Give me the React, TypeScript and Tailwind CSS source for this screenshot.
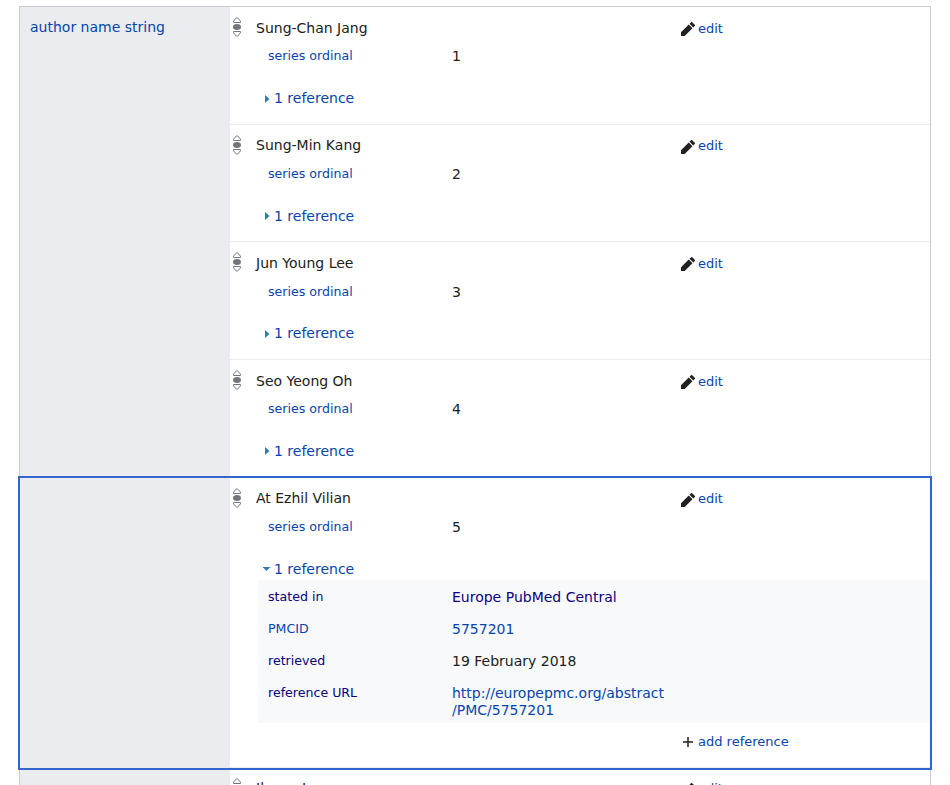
import React from 'react';

const authors = ['Sung-Chan Jang', 'Sung-Min Kang', 'Jun Young Lee', 'Seo Yeong Oh', 'At Ezhil Vilian', 'Ilsong Lee'];

function Rank() {
  return (
    <svg className="mt-[10px] ml-[3px] block h-5 w-2 shrink-0" viewBox="0 0 8 20" fill="none" stroke="#72777d" strokeWidth="1">
      <path d="M3.4 .9h1.2L7.5 4.2v1.3h-7V4.2z" />
      <ellipse cx="4" cy="10" rx="4" ry="3" fill="#72777d" stroke="none" />
      <path d="M3.4 19.1h1.2L7.5 15.8v-1.3h-7v1.3z" />
    </svg>
  );
}

function Pencil() {
  return (
    <svg className="mt-[2.5px] mr-[3px] ml-px h-[14px] w-[14px]" viewBox="1 1 18 18" fill="#202122">
      <path d="m16.77 8 1.94-2a1 1 0 0 0 0-1.41l-3.34-3.3a1 1 0 0 0-1.41 0L12 3.23zM1 14.25V19h4.75l9.96-9.96-4.75-4.75z" />
    </svg>
  );
}

function Qualifier({ label, visited, children }: { label: string; visited?: boolean; children: React.ReactNode }) {
  return (
    <div className="flex">
      <div className={`w-[184px] text-[12.6px] leading-4 ${visited ? 'text-[#0b0080]' : 'text-[#0645ad]'}`}>{label}</div>
      <div className="w-[225px] leading-[17px]">{children}</div>
    </div>
  );
}

function Statement({ name, index }: { name: string; index: number }) {
  const open = index === 4;
  return (
    <div className={`flex ${open ? 'relative z-10 h-[290.1px] outline-2 outline-[#3366cc]' : 'h-[117.625px]'}`}>
      <div className="w-[210px] shrink-0 bg-[#eaecf0] pt-[12px] pl-[10px] leading-[17px]">
        {index === 0 && <a className="text-[#0645ad]">author name string</a>}
      </div>
      <div className="flex grow border-b border-[#eaecf0]">
        <Rank />
        <div className="grow pl-[15px]">
          <div className="flex pt-[12.7px]">
            <div className="w-[424px] leading-[17px]">{name}</div>
            <a className="flex text-[13px] leading-[18px] text-[#0645ad]"><Pencil />edit</a>
          </div>
          <div className="mt-[10.65px] pl-[12px]">
            <Qualifier label="series ordinal">{index + 1}</Qualifier>
          </div>
          <a className="mt-[24.75px] flex items-center pl-[7px] leading-[17px] text-[#0645ad]">
            <svg className="mr-[3px] h-2 w-2" viewBox="0 0 8 8" fill="#347bae">
              {open ? <path d="M-.5 2h8L3.5 6z" /> : <path d="M2 0v8l4.5-4z" />}
            </svg>
            1 reference
          </a>
          {open && (
            <>
              <div className="mt-[2.6px] ml-[2px] flex h-[143px] flex-col gap-[15px] bg-[#f8f9fa] pt-[9px] pl-[10px]">
                <Qualifier label="stated in" visited><span className="text-[#0b0080]">Europe PubMed Central</span></Qualifier>
                <Qualifier label="PMCID"><span className="text-[#0645ad]">5757201</span></Qualifier>
                <Qualifier label="retrieved" visited>19 February 2018</Qualifier>
                <Qualifier label="reference URL" visited>
                  <span className="text-[#0645ad]">http://europepmc.org/abstract<br />/PMC/5757201</span>
                </Qualifier>
              </div>
              <a className="mt-[10px] flex items-center pl-[427px] text-[13px] leading-[18px] text-[#0645ad]">
                <svg className="mr-[5px] h-[10px] w-[10px]" viewBox="0 0 10 10" stroke="#202122" strokeWidth="1.5"><path d="M0 5h10M5 0v10" /></svg>
                add reference
              </a>
            </>
          )}
        </div>
      </div>
    </div>
  );
}

export default function App() {
  return (
    <main className="h-[785px] overflow-hidden bg-white pt-[6px] pl-[19px] font-['DejaVu_Sans',sans-serif] text-[14px] text-[#202122]">
      <div className="w-[912px] border border-[#c8ccd1]">
        {authors.map((name, i) => <Statement key={name} name={name} index={i} />)}
      </div>
    </main>
  );
}
